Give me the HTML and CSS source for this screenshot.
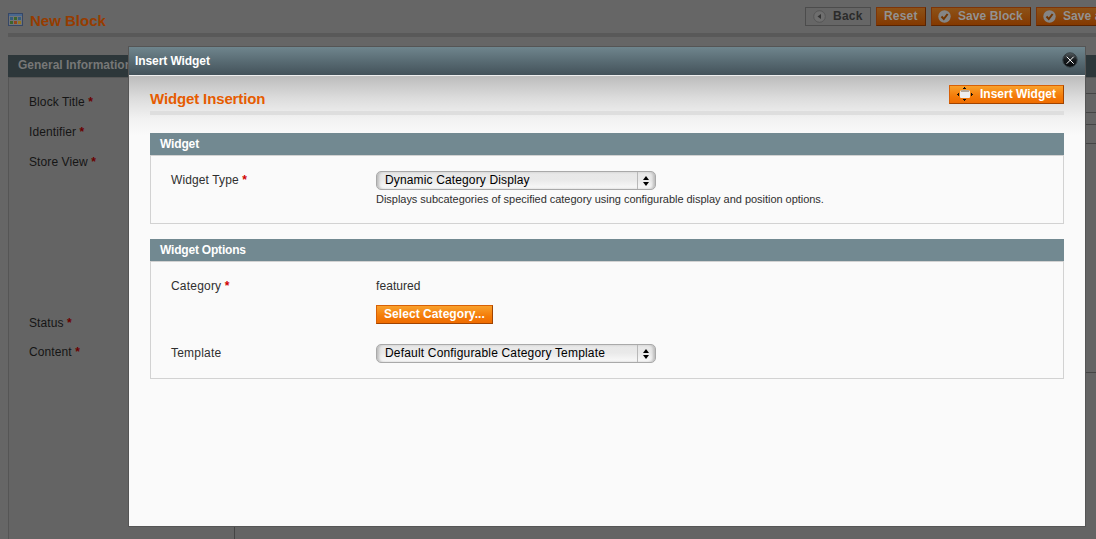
FILE: index.html
```html
<!DOCTYPE html>
<html lang="en">
<head>
<meta charset="utf-8">
<title>New Block</title>
<link rel="stylesheet" href="styles.css">
</head>
<body>
<div class="page">
  <header class="page-head">
    <svg class="page-icon" width="15" height="13" viewBox="0 0 15 13"><rect x=".5" y=".5" width="14" height="12" fill="#727579" stroke="#364766"/><path d="M1 1h13v2H1z" fill="#49678e"/><path d="M2 4h3v3H2zM10 4h3v3h-3z" fill="#345d7d"/><path d="M2 8h3v3H2zM6 4h3v3H6z" fill="#3d652c"/><path d="M6 8h3v3H6z" fill="#91451d"/><path d="M10 8h3v3h-3z" fill="#94761f"/></svg>
    <h1 class="page-title">New Block</h1>
    <div class="page-actions">
      <span class="dim-btn dim-btn-back"><svg class="bi" width="13" height="13" viewBox="0 0 13 13"><circle cx="6.5" cy="6.5" r="5.8" fill="#6e6e6e" stroke="#565656"/><path d="M8 4v5L4.5 6.5z" fill="#333"/></svg><span class="t-back">Back</span></span>
      <span class="dim-btn dim-btn-reset"><span class="t-reset">Reset</span></span>
      <span class="dim-btn dim-btn-save"><svg class="bi" width="13" height="13" viewBox="0 0 13 13"><circle cx="6.5" cy="6.5" r="6.2" fill="#858585"/><path d="M3.5 6.5l2.3 2.5L9.6 4" fill="none" stroke="#713500" stroke-width="2"/></svg><span class="t-save">Save Block</span></span>
      <span class="dim-btn dim-btn-cont"><svg class="bi" width="13" height="13" viewBox="0 0 13 13"><circle cx="6.5" cy="6.5" r="6.2" fill="#858585"/><path d="M3.5 6.5l2.3 2.5L9.6 4" fill="none" stroke="#713500" stroke-width="2"/></svg><span class="t-save">Save and Continue Edit</span></span>
    </div>
  </header>
  <section class="general">
    <h2 class="general-head"><span>General Information</span></h2>
    <div class="general-body">
      <div class="labels">
        <div class="row">Block Title <b>*</b></div>
        <div class="row">Identifier <b>*</b></div>
        <div class="row row-store">Store View <b>*</b></div>
        <div class="row row-status">Status <b>*</b></div>
        <div class="row">Content <b>*</b></div>
      </div>
      <div class="fields"><div class="input"></div><div class="input input-second"></div><div class="editor-top"></div><div class="editor"></div></div>
    </div>
  </section>
</div>
<div class="dialog">
  <div class="dialog-bar"><span class="t-bar">Insert Widget</span>
    <svg class="close" width="16" height="16" viewBox="0 0 16 16"><defs><linearGradient id="c" x2="0" y2="1"><stop stop-color="#555c60"/><stop offset=".5" stop-color="#15191c"/><stop offset="1" stop-color="#080b0e"/></linearGradient></defs><circle cx="8" cy="8" r="7.2" fill="url(#c)" stroke="#384247"/><path d="M4.7 4.7l7 7m0-7l-7 7" stroke="#fff" stroke-width="1"/></svg>
  </div>
  <div class="dialog-body">
    <div class="dialog-head"><h2 class="dialog-title">Widget Insertion</h2>
      <button class="btn btn-insert"><svg width="16" height="14" viewBox="0 0 16 14"><path d="M7 0h1v1h1v1H6V1h1zM7 14h1v-1h1v-1H6v1h1zM0 7h1V6h1v3H1V8H0zM16 7h-1V6h-1v3h1V8h1z" fill="#17120b"/><rect x="3" y="3.5" width="10" height="7.5" rx="1" fill="#eee"/><path d="M4 3h8v2H4z" fill="#b5a99b"/></svg><span class="t-insert">Insert Widget</span></button>
    </div>
    <section class="box">
      <h3 class="box-head"><span class="t-widget">Widget</span></h3>
      <div class="box-body">
        <div class="field"><label><span class="t-type">Widget Type</span> <b>*</b></label>
          <div class="value"><div class="select"><span class="t-dyn">Dynamic Category Display</span><i class="arrows"><svg width="6" height="10" viewBox="0 0 6 10"><path d="M3 0l3 4H0zM3 10l3-4H0z"/></svg></i></div><p class="note"><span>Displays subcategories of specified category using configurable display and position options.</span></p></div></div>
      </div>
    </section>
    <section class="box box-options">
      <h3 class="box-head"><span class="t-options">Widget Options</span></h3>
      <div class="box-body">
        <div class="field field-category"><label><span class="t-cat">Category</span> <b>*</b></label><div class="value"><div class="plain">featured</div><button class="btn btn-select"><span class="t-select">Select Category...</span></button></div></div>
        <div class="field field-template"><label><span class="t-cat">Template</span></label><div class="value"><div class="select"><span class="t-def">Default Configurable Category Template</span><i class="arrows"><svg width="6" height="10" viewBox="0 0 6 10"><path d="M3 0l3 4H0zM3 10l3-4H0z"/></svg></i></div></div></div>
      </div>
    </section>
  </div>
</div>
</body>
</html>
```
FILE: styles.css
```css
*{box-sizing:border-box}
body{margin:0;width:1096px;height:539px;overflow:hidden;background:#666;font:12px/16px "Liberation Sans",Arial,sans-serif;color:#2f2f2f}
h1,h2,h3,p{margin:0}
svg{display:block;flex:none}
span{white-space:nowrap}
.page{height:539px;padding-left:8px;overflow:hidden}
.page-head{height:37px;border-bottom:4px solid #595959;display:flex;position:relative}
.page-icon{margin-top:13px}
.page-title{margin:12px 0 0 7px;font-size:15px;line-height:18px;color:#963c00;white-space:nowrap}
.page-actions{display:flex;gap:5px;margin:7px 0 0 700px;flex:none;position:absolute;left:97px}
.dim-btn{height:19px;display:flex;align-items:center;flex:none;font-weight:bold;line-height:17px;color:#929292;background:linear-gradient(#8d5218,#843900);border:1px solid;border-color:#7d3509 #5b2400 #5b2400 #7d3509;overflow:hidden}
.dim-btn .bi{margin:0 7px 0 6px}
.dim-btn-back{width:66px;color:#2b2b2b;background:#666;border-color:#4c4c4c}
.dim-btn-back .bi{margin-left:7px}
.dim-btn-reset{width:50px;padding-left:7px}
.dim-btn-save{width:100px}
.dim-btn-cont{width:180px}
.t-back{letter-spacing:.25px}
.t-reset{letter-spacing:.2px}
.t-save{letter-spacing:.08px}
.general{margin-top:18px;margin-right:-12px}
.general-head{height:22px;background:#2d373a;color:#777;font-size:12px;line-height:21px;padding-left:10px}
.general-body{height:470px;border:1px solid #555;background:#646464;padding:16px 0 0 20px;display:flex;color:#151515}
.labels{width:205px;flex:none;letter-spacing:.1px}
.row{height:30px;line-height:16px}
.row-store{height:161px}
.row-status{height:29px}
.row b{color:#6b0000}
.fields{flex:1}
.input{height:20px;border:1px solid #444;margin-top:-1px}
.input-second{margin-top:11px}
.editor-top{height:229px;border-bottom:1px solid #444}
.editor{height:180px;border-left:1px solid #444}
.dialog{position:absolute;left:128px;top:46px;width:958px;height:481px;border:1px solid #555;background:#fafafa}
.dialog-bar{height:28px;background:linear-gradient(#6f858d,#43525a);color:#fff;font-weight:bold;line-height:28px;padding:0 7px 0 6px;display:flex;justify-content:space-between}
.t-bar{letter-spacing:-.08px}
.close{margin-top:5px}
.dialog-body{height:451px;border-top:1px solid #eee;padding:9px 21px 0;background:linear-gradient(#bcbcbc,#dcdcdc 22px,#f1f1f1 42px,#fafafa 60px)}
.dialog-head{height:30px;border-bottom:4px solid #dedede;display:flex;justify-content:space-between}
.dialog-title{font-size:15px;line-height:18px;margin-top:5px;color:#e65c00;letter-spacing:-.13px}
.btn{height:19px;padding:0 0 1px;border:1px solid;border-color:#d86005 #a04300 #a04300 #d86005;background:linear-gradient(#f9a12c,#f47b08 60%,#ef6c00);font:bold 12px/16px "Liberation Sans",Arial,sans-serif;color:#fff;display:flex;align-items:center}
.btn-insert{width:115px;padding-left:7px;gap:7px}
.btn-select{width:117px;padding-left:7px;margin-top:11px}
.t-select{letter-spacing:.06px}
.box{margin-top:18px}
.box-head{height:22px;background:#728991;color:#fff;font-size:12px;line-height:22px;padding-left:10px}
.t-widget{letter-spacing:-.15px}
.t-options{letter-spacing:-.2px}
.box-body{height:69px;border:1px solid #d2d2d2;background:#fafafa;padding:15px 0 0 20px}
.box-options{margin-top:15px}
.box-options .box-body{height:118px;padding-top:16px}
.field{display:flex}
.field label{width:205px;line-height:18px}
.field-category label{line-height:16px}
.field b{color:#d00000}
.t-type{letter-spacing:.12px}
.t-cat{letter-spacing:.2px}
.select{width:280px;height:19px;border:1px solid #a9a9a9;border-radius:5px;background:linear-gradient(#e8e8e8,#e9e9e9 45%,#fafafa);box-shadow:inset 3px 0 3px -1px #bbb,inset -3px 0 3px -1px #bbb;padding-left:8px;color:#000;display:flex;justify-content:space-between;line-height:17px}
.t-dyn{letter-spacing:.14px}
.t-def{letter-spacing:.18px}
.arrows{width:18px;border-left:1px solid #b9b9b9;display:flex;align-items:center;justify-content:center;padding-right:1px}
.note{font-size:11px;line-height:14px;margin-top:2px;letter-spacing:-.03px}
.plain{line-height:16px;letter-spacing:.07px}
.field-template{margin-top:20px}
```
